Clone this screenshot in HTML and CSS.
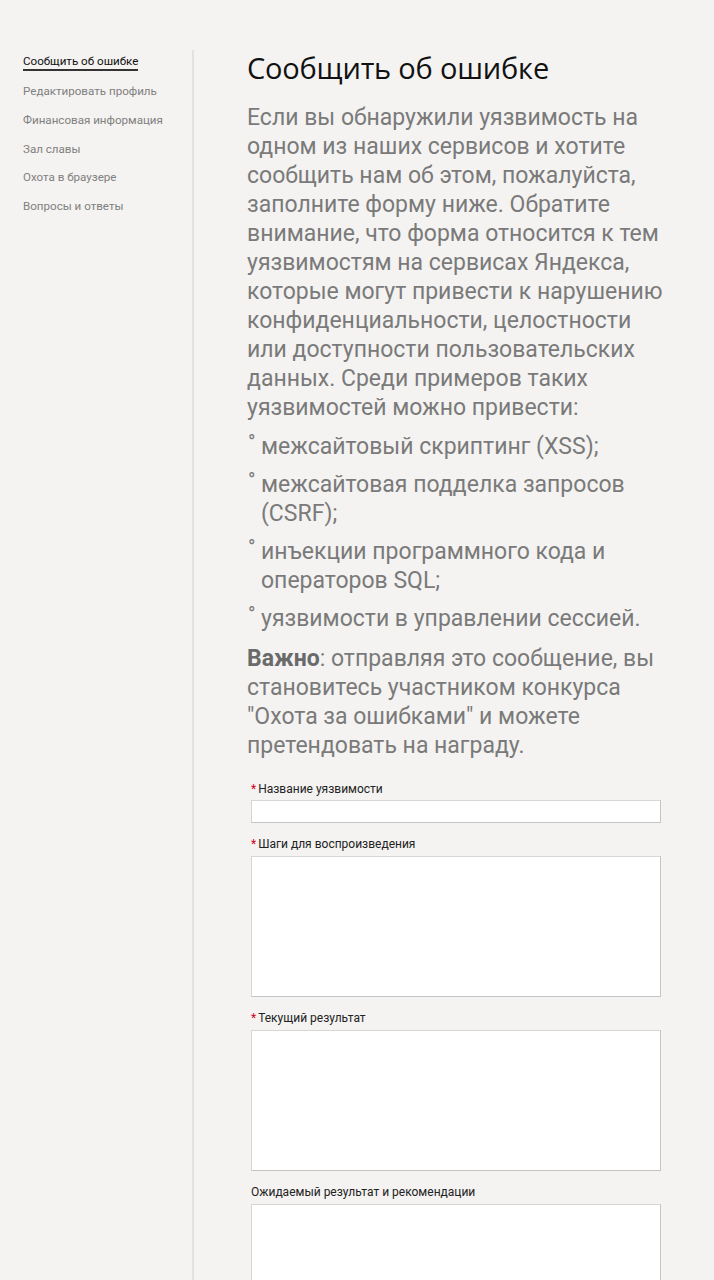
FILE: index.html
```html
<!DOCTYPE html>
<html>
<head>
  <meta http-equiv="Content-type" content="text/html; charset=utf-8">
  <meta name='viewport' content='width=device-width, initial-scale=1'>
  <title>Сообщить об ошибке</title>
  <link rel="stylesheet" href="styles.css">
</head>
<body>
<div class="page">
  <div class="side">
    <a class="side-item active" href="#">Сообщить об ошибке</a>
    <a class="side-item" href="#">Редактировать профиль</a>
    <a class="side-item" href="#">Финансовая информация</a>
    <a class="side-item" href="#">Зал славы</a>
    <a class="side-item" href="#">Охота в браузере</a>
    <a class="side-item" href="#">Вопросы и ответы</a>
  </div>
  <div class="main">
    <h1 class="title">Сообщить об ошибке</h1>
    <p class="text">Если вы обнаружили уязвимость на одном из наших сервисов и хотите сообщить нам об этом, пожалуйста, заполните форму ниже. Обратите внимание, что форма относится к тем уязвимостям на сервисах Яндекса, которые могут привести к нарушению конфиденциальности, целостности или доступности пользовательских данных. Среди примеров таких уязвимостей можно привести:</p>
    <ul class="list">
      <li>межсайтовый скриптинг (XSS);</li>
      <li>межсайтовая подделка запросов (CSRF);</li>
      <li>инъекции программного кода и операторов SQL;</li>
      <li>уязвимости в управлении сессией.</li>
    </ul>
    <p class="text"><b>Важно</b>: отправляя это сообщение, вы становитесь участником конкурса "Охота за ошибками" и можете претендовать на награду.</p>

    <form class="form">
      <label class="field">
        <span class="label"><span class="req">*</span>Название уязвимости</span>
        <input type="text" class="input">
      </label>
      <label class="field">
        <span class="label"><span class="req">*</span>Шаги для воспроизведения</span>
        <textarea class="area"></textarea>
      </label>
      <label class="field">
        <span class="label"><span class="req">*</span>Текущий результат</span>
        <textarea class="area"></textarea>
      </label>
      <label class="field">
        <span class="label">Ожидаемый результат и рекомендации</span>
        <textarea class="area"></textarea>
      </label>
    </form>
  </div>
</div>
</body>
</html>
```

FILE: styles.css
```css
html, body {margin:0;padding:0;background:#f4f3f1;}
body {font-family:Roboto, "Liberation Sans", sans-serif;color:#222;}

.page {display:flex;padding-top:50px;min-height:1230px;}

/* left menu */
.side {width:169px;padding:4px 0 0 23px;border-right:2px solid #e3e2e0;display:flex;flex-direction:column;align-items:flex-start;}
.side-item {font-size:11.6px;line-height:16px;height:28.8px;color:#808080;text-decoration:none;white-space:nowrap;}
.side-item.active {color:#111;height:auto;margin-bottom:12px;padding-bottom:1px;border-bottom:2px solid #333;line-height:14px;}

/* content */
.main {padding-left:53px;width:422px;}
.title {font-family:"Open Sans", sans-serif;font-weight:400;font-size:29px;line-height:36px;margin:0 0 17px;color:#111;letter-spacing:-0.2px;}
.text {font-size:23px;line-height:29px;color:#7a7a7a;margin:0;}
.text b {color:#6a6a6a;font-weight:700;}
.list {list-style:none;margin:10px 0 11px;padding:0 0 0 14px;}
.list li {position:relative;font-size:23px;line-height:29px;color:#7a7a7a;margin-bottom:9px;}
.list li:before {content:"\00b0";position:absolute;left:-13px;top:-4px;font-size:20px;color:#7a7a7a;}

/* form */
.form {margin:21px 0 0 4px;}
.field {display:block;margin-bottom:13px;}
.label {display:block;font-size:12px;line-height:16px;color:#222;margin-bottom:4px;}
.req {color:#d0021b;margin-right:2px;}
.input, .area {display:block;box-sizing:border-box;width:410px;background:#fff;border:1px solid #d6d6d6;border-bottom-color:#c4c4c4;border-right-color:#c4c4c4;margin:0;font:14px Roboto, sans-serif;}
.input {height:23px;margin-top:-1px;}
.area {height:141px;resize:none;}
```
